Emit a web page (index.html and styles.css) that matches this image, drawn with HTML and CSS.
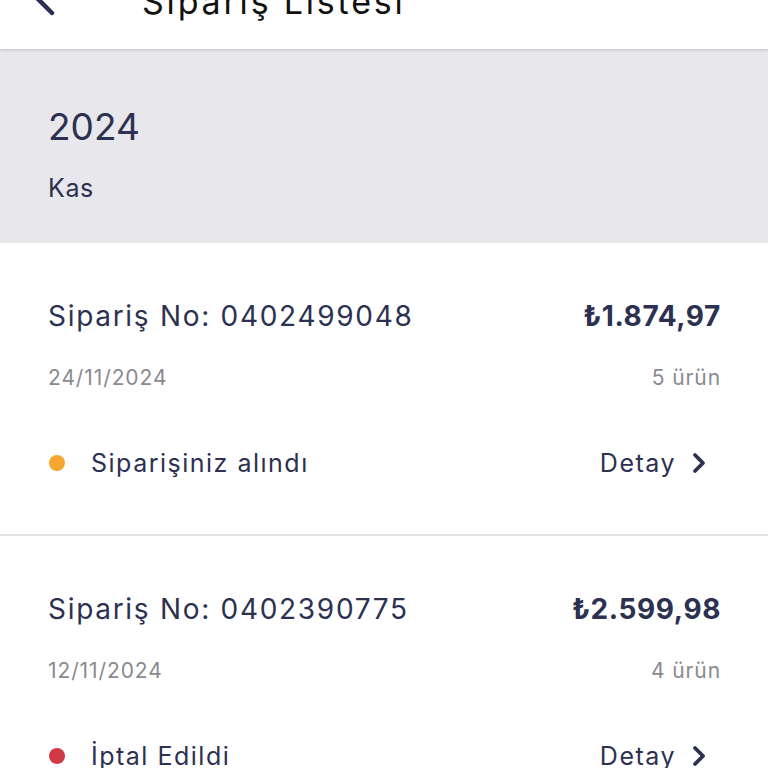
FILE: index.html
```html
<!DOCTYPE html>
<html lang="tr">
<head>
<meta charset="utf-8">
<title>Sipariş Listesi</title>
<link rel="stylesheet" href="styles.css">
</head>
<body>
<header class="appbar">
  <div class="appbar-row">
    <span class="back">
      <svg width="30" height="40" viewBox="0 0 30 40"><path d="M22 4 L6 20 L22 36" fill="none" stroke="#2c3151" stroke-width="4.5" stroke-linecap="round" stroke-linejoin="round"/></svg>
    </span>
    <h1 class="title">Sipariş Listesi</h1>
  </div>
</header>
<section class="month">
  <div class="year">2024</div>
  <div class="mon">Kas</div>
</section>
<main>
  <article class="order">
    <div class="row top">
      <span class="ono">Sipariş No: 0402499048</span>
      <span class="price">₺1.874,97</span>
    </div>
    <div class="row meta">
      <span>24/11/2024</span>
      <span>5 ürün</span>
    </div>
    <div class="row status">
      <span class="st"><span class="dot orange"></span>Siparişiniz alındı</span>
      <span class="detail">Detay<svg width="18" height="22" viewBox="0 0 18 22"><path d="M5 3 L13 11 L5 19" fill="none" stroke="#2c3151" stroke-width="3.8" stroke-linecap="round" stroke-linejoin="round"/></svg></span>
    </div>
  </article>
  <article class="order">
    <div class="row top">
      <span class="ono">Sipariş No: 0402390775</span>
      <span class="price">₺2.599,98</span>
    </div>
    <div class="row meta">
      <span>12/11/2024</span>
      <span>4 ürün</span>
    </div>
    <div class="row status">
      <span class="st"><span class="dot red"></span>İptal Edildi</span>
      <span class="detail">Detay<svg width="18" height="22" viewBox="0 0 18 22"><path d="M5 3 L13 11 L5 19" fill="none" stroke="#2c3151" stroke-width="3.8" stroke-linecap="round" stroke-linejoin="round"/></svg></span>
    </div>
  </article>
</main>
</body>
</html>
```
FILE: styles.css
```css
html, body {
  margin: 0;
  padding: 0;
  background: #ffffff;
  font-family: Inter, "Noto Sans", sans-serif;
  color: #2c3151;
}
body {
  height: 768px;
  overflow: hidden;
}
.appbar {
  height: 49px;
  overflow: hidden;
  position: relative;
  z-index: 1;
  background: #ffffff;
  box-shadow: 0 1px 3px rgba(0,0,0,0.18);
}
.appbar-row {
  height: 60px;
  margin-top: -33px;
  display: flex;
  align-items: center;
  padding-left: 30px;
}
.back {
  display: flex;
  width: 112px;
}
.title {
  margin: 10px 0 0;
  font-weight: 400;
  font-size: 34px;
  line-height: 40px;
  color: #111111;
  letter-spacing: 2.8px;
}
.month {
  background: #e7e7ec;
  padding: 55px 48px 40px;
}
.year {
  font-size: 37px;
  line-height: 46px;
}
.mon {
  margin-top: 23px;
  font-size: 25px;
  line-height: 30px;
  letter-spacing: 0.6px;
}
.order {
  padding: 56px 47px 55px 48px;
  border-bottom: 2px solid #e2e2e4;
}
.row {
  display: flex;
  justify-content: space-between;
  align-items: baseline;
}
.top {
  font-size: 28px;
  line-height: 34px;
}
.ono {
  letter-spacing: 1.7px;
}
.price {
  font-weight: 700;
  letter-spacing: 0.6px;
}
.meta {
  margin-top: 32px;
  font-size: 21px;
  line-height: 26px;
  color: #8a8a90;
  letter-spacing: 0.9px;
}
.status {
  margin-top: 56px;
  font-size: 25px;
  line-height: 32px;
  letter-spacing: 1.5px;
  align-items: center;
}
.st {
  display: flex;
  align-items: center;
}
.dot {
  width: 16px;
  height: 16px;
  border-radius: 50%;
  margin-left: 1px;
  margin-right: 26px;
}
.orange { background: #f6a52f; }
.red { background: #d13a45; }
.detail {
  display: flex;
  align-items: center;
  gap: 14px;
  margin-right: 13px;
}
```
